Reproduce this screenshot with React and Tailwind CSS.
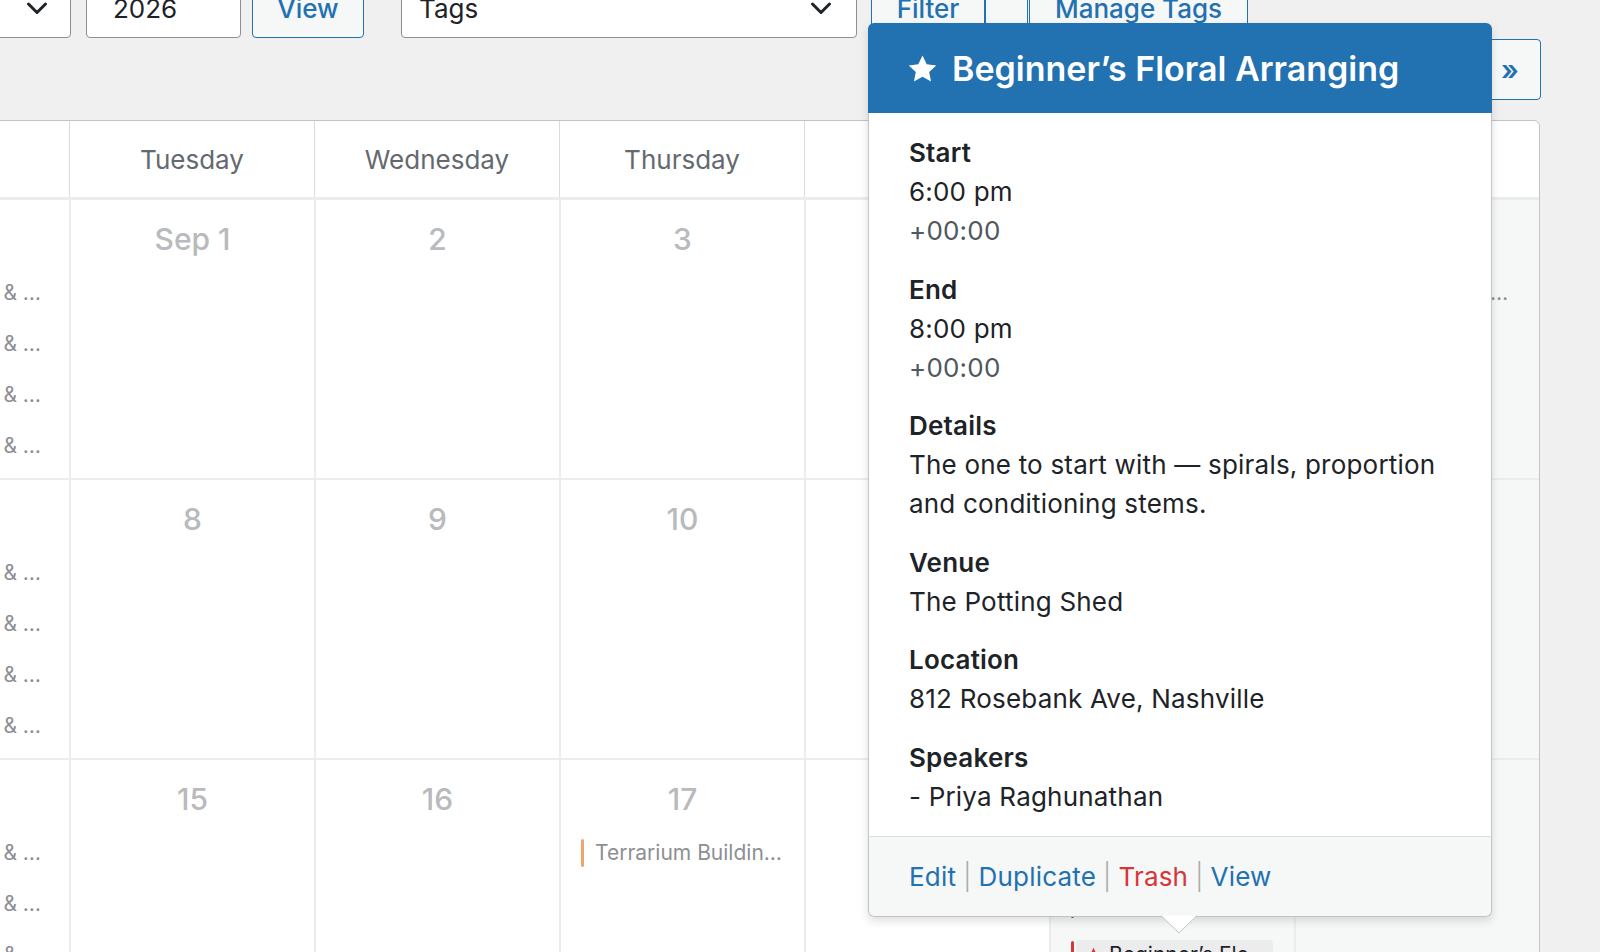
import React from "react";

const Chevron = () => (
  <svg width="22" height="13" viewBox="0 0 22 13" fill="none">
    <path d="M2.5 2 L11 10.5 L19.5 2" stroke="#1d2327" strokeWidth="3" strokeLinecap="round" strokeLinejoin="round" />
  </svg>
);

const Star = ({ className, color }) => (
  <svg viewBox="0 0 20 20" className={className}>
    <path fill={color} d="M10 1l2.9 6.1 6.6.8-4.9 4.5 1.3 6.6L10 15.7 4.1 19l1.3-6.6L.5 7.9l6.6-.8z" />
  </svg>
);

const days = ["Monday", "Tuesday", "Wednesday", "Thursday", "Friday", "Saturday", "Sunday"];

const monEvents = (n) =>
  Array.from({ length: n }).map((_, i) => ({
    title: ["Dried Poppies & Wreaths", "Dried Poppies & Wheat", "Dried Poppies & Moss", "Dried Poppies & Wildgrass"][i % 4],
    color: ["#72aee6", "#f0b849", "#68de7c", "#d63638"][i % 4],
  }));

const weeks = [
  [
    { d: "Aug 31", ev: monEvents(4) },
    { d: "Sep 1", ev: [] },
    { d: "2", ev: [] },
    { d: "3", ev: [] },
    { d: "4", ev: [] },
    { d: "5", ev: [] },
    { d: "6", ev: [{ title: "Autumn Wreath Making Ga", color: "#72aee6" }] },
  ],
  [
    { d: "7", ev: monEvents(4) },
    { d: "8", ev: [] },
    { d: "9", ev: [] },
    { d: "10", ev: [] },
    { d: "11", ev: [] },
    { d: "12", ev: [] },
    { d: "13", ev: [] },
  ],
  [
    { d: "14", ev: monEvents(3) },
    { d: "15", ev: [] },
    { d: "16", ev: [] },
    { d: "17", ev: [{ title: "Terrarium Building Basics", color: "#f0a56e" }] },
    { d: "18", ev: [] },
    {
      d: "19",
      ev: [
        { title: "Bonsai Pruning Workshop", color: "#72aee6" },
        { title: "Pressed Flower Prints", color: "#2271b1" },
        { title: "Beginner\u2019s Floral Arranging", color: "#d63638", star: true, active: true },
      ],
    },
    { d: "20", ev: [] },
  ],
];

export default function App() {
  return (
    <div className="relative w-[1600px] h-[952px] overflow-hidden bg-[#f0f0f1] font-['Inter','Noto_Sans',sans-serif] text-[#1d2327]">
      {/* toolbar */}
      <div className="flex h-[60px] -mt-[22px] text-[26px]">
        <div className="ml-[-129px] w-[200px] shrink-0 bg-white border border-[#8c8f94] rounded-[4px] flex items-center justify-end pr-[22px]">
          <Chevron />
        </div>
        <div className="ml-[15px] w-[155px] shrink-0 bg-white border border-[#8c8f94] rounded-[4px] flex items-center pl-[26px]">
          2026
        </div>
        <div className="ml-[11px] w-[112px] shrink-0 bg-[#f6f7f7] border border-[#2271b1] rounded-[4px] flex items-center justify-center text-[#2271b1] font-medium">
          View
        </div>
        <div className="ml-[37px] w-[456px] shrink-0 bg-white border border-[#8c8f94] rounded-[4px] flex items-center justify-between pl-[17px] pr-[24px]">
          <span>Tags</span>
          <Chevron />
        </div>
        <div className="ml-[14px] w-[114px] shrink-0 bg-[#f6f7f7] border border-[#2271b1] rounded-[4px] flex items-center justify-center text-[#2271b1] font-medium">
          Filter
        </div>
        <div className="w-[43px] shrink-0 bg-[#f6f7f7] border border-[#2271b1] rounded-[4px]" />
        <div className="ml-[1px] w-[219px] shrink-0 bg-[#f6f7f7] border border-[#2271b1] rounded-[4px] flex items-center justify-center text-[#2271b1] font-medium">
          Manage Tags
        </div>
      </div>

      {/* nav */}
      <div className="flex justify-end mt-[1px] pr-[59px]">
        <div className="w-[62px] h-[61px] bg-[#f6f7f7] border border-[#2271b1] rounded-[4px] flex items-center justify-center text-[#2271b1] text-[28px] font-semibold">
          »
        </div>
      </div>

      {/* calendar */}
      <div className="mt-[20px] ml-[-177px] w-[1717px] bg-white border border-[#c3c4c7] rounded-tr-[6px]">
        <div className="grid grid-cols-7 h-[79px] border-b-[3px] border-[#ececec]">
          {days.map((d, i) => (
            <div
              key={d}
              className={`flex items-center justify-center text-[26px] text-[#646970] ${i > 0 ? "border-l border-[#dcdcde]" : ""}`}
            >
              {d}
            </div>
          ))}
        </div>
        {weeks.map((w, wi) => (
          <div key={wi} className="grid grid-cols-7 h-[280px] border-b-2 border-[#ececec]">
            {w.map((c, ci) => (
              <div
                key={ci}
                className={`min-w-0 ${ci > 0 ? "border-l-2 border-[#ececec]" : ""} ${ci >= 5 ? "bg-[#f6f7f7]" : ""}`}
              >
                <div className="pt-[19px] h-[59px] leading-[40px] text-center text-[30px] font-medium text-[#b8babd]">
                  {c.d}
                </div>
                <div className="mt-[19px] flex flex-col gap-[21px] pl-[20px] pr-[21px]">
                  {c.ev.map((e, ei) => (
                    <div key={ei} className="flex items-center h-[30px] min-w-0">
                      <div className="w-[3px] h-[28px] rounded-full shrink-0" style={{ backgroundColor: e.color }} />
                      <div
                        className={`ml-[2px] pl-[9px] flex-1 min-w-0 h-[30px] flex items-center gap-[7px] rounded-[4px] ${e.active ? "bg-[#ececec]" : ""}`}
                      >
                        {e.star && <Star className="w-[17px] h-[17px] shrink-0" color="#d63638" />}
                        <span className={`truncate text-[21px] ${e.active ? "text-[#1d2327]" : "text-[#8c8f94]"}`}>{e.title}</span>
                      </div>
                    </div>
                  ))}
                </div>
              </div>
            ))}
          </div>
        ))}
      </div>

      {/* popover */}
      <div className="absolute left-[868px] top-[23px] w-[624px] rounded-[6px] shadow-[0_4px_10px_rgba(0,0,0,0.13)]">
        <div className="h-[90px] bg-[#2271b1] rounded-t-[6px] flex items-center pl-[40px] gap-[15px]">
          <Star className="w-[29px] h-[29px] shrink-0" color="#ffffff" />
          <span className="text-white text-[34px] font-semibold">Beginner’s Floral Arranging</span>
        </div>
        <div className="bg-white border-x border-[#c3c4c7]">
          <div className="px-[40px] py-[20px] flex flex-col gap-[19.5px] text-[26px] leading-[39px] tracking-[0.2px]">
            <div>
              <div className="font-semibold">Start</div>
              <div>6:00 pm</div>
              <div className="text-[#50575e]">+00:00</div>
            </div>
            <div>
              <div className="font-semibold">End</div>
              <div>8:00 pm</div>
              <div className="text-[#50575e]">+00:00</div>
            </div>
            <div>
              <div className="font-semibold">Details</div>
              <div className="whitespace-nowrap">
                The one to start with — spirals, proportion
                <br />
                and conditioning stems.
              </div>
            </div>
            <div>
              <div className="font-semibold">Venue</div>
              <div>The Potting Shed</div>
            </div>
            <div>
              <div className="font-semibold">Location</div>
              <div>812 Rosebank Ave, Nashville</div>
            </div>
            <div>
              <div className="font-semibold">Speakers</div>
              <div>- Priya Raghunathan</div>
            </div>
          </div>
        </div>
        <div className="bg-[#f6f7f7] border border-[#c3c4c7] border-t-[#dcdcde] rounded-b-[6px] px-[40px] py-[20px] text-[26px] leading-[39px] tracking-[0.2px]">
          <span className="text-[#2271b1]">Edit</span>
          <span className="text-[#a7aaad] mx-[7px] font-light">|</span>
          <span className="text-[#2271b1]">Duplicate</span>
          <span className="text-[#a7aaad] mx-[7px] font-light">|</span>
          <span className="text-[#d63638]">Trash</span>
          <span className="text-[#a7aaad] mx-[7px] font-light">|</span>
          <span className="text-[#2271b1]">View</span>
        </div>
      </div>
      <svg className="absolute left-[1161px] top-[915px]" width="36" height="19" viewBox="0 0 36 19">
        <path d="M0 0.5 L18 18 L36 0.5 Z" fill="#ffffff" />
        <path d="M0 0.5 L18 18 L36 0.5" fill="none" stroke="#c3c4c7" strokeWidth="1" />
      </svg>
    </div>
  );
}
